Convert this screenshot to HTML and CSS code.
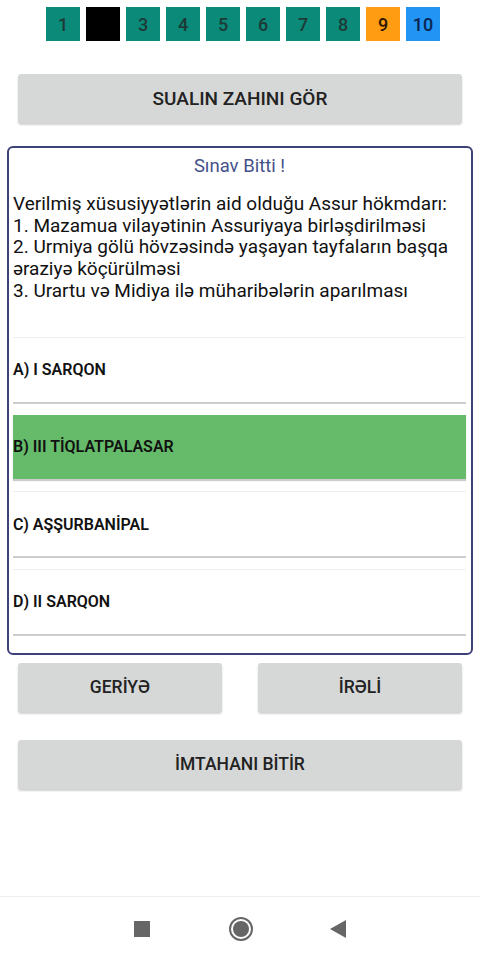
FILE: index.html
```html
<!DOCTYPE html>
<html lang="az">
  <head>
    <meta charset="UTF-8" />
    <meta name="viewport" content="width=device-width, initial-scale=1.0" />
    <title>Sınav</title>
    <link rel="stylesheet" href="styles.css">
  </head>
  <body>
    <div class="screen">
      <!-- sual nömrələri -->
      <div class="numbers">
        <span class="num">1</span>
        <span class="num current"></span>
        <span class="num">3</span>
        <span class="num">4</span>
        <span class="num">5</span>
        <span class="num">6</span>
        <span class="num">7</span>
        <span class="num">8</span>
        <span class="num orange">9</span>
        <span class="num blue">10</span>
      </div>

      <button class="btn wide hint">SUALIN ZAHINI GÖR</button>

      <div class="card">
        <div class="status">Sınav Bitti !</div>
        <div class="question">
          Verilmiş xüsusiyyətlərin aid olduğu Assur hökmdarı:<br>
          1. Mazamua vilayətinin Assuriyaya birləşdirilməsi<br>
          2. Urmiya gölü hövzəsində yaşayan tayfaların başqa əraziyə köçürülməsi<br>
          3. Urartu və Midiya ilə müharibələrin aparılması
        </div>
        <div class="options">
          <div class="option">A) I SARQON</div>
          <div class="option right">B) III TİQLATPALASAR</div>
          <div class="option">C) AŞŞURBANİPAL</div>
          <div class="option">D) II SARQON</div>
        </div>
      </div>

      <div class="nav-row">
        <button class="btn half">GERİYƏ</button>
        <button class="btn half">İRƏLİ</button>
      </div>

      <button class="btn wide finish">İMTAHANI BİTİR</button>

      <div class="sysbar">
        <span class="sq"></span>
        <span class="home"><span class="dot"></span></span>
        <span class="back"></span>
      </div>
    </div>
  </body>
</html>
```

FILE: styles.css
```css
* {
  margin: 0;
  padding: 0;
  box-sizing: border-box;
}

body {
  font-family: Roboto, "Noto Sans", sans-serif;
  background: #fff;
  color: #000;
}

.screen {
  min-height: 960px;
  display: flex;
  flex-direction: column;
}

.numbers {
  display: flex;
  gap: 6px;
  padding: 7px 0 0 46px;
}

.num {
  width: 34px;
  height: 34px;
  background: #0b8a7a;
  color: #1d3a36;
  font-size: 18px;
  font-weight: 500;
  display: flex;
  align-items: center;
  justify-content: center;
}

.num.current {
  background: #000;
}

.num.orange {
  background: #ff9c12;
  color: #2a1800;
}

.num.blue {
  background: #2194f4;
  color: #0a2650;
}

.btn {
  border: none;
  background: #d6d7d7;
  border-radius: 3px;
  box-shadow: 0 2px 2px rgba(0, 0, 0, 0.18);
  font-family: Roboto, sans-serif;
  font-size: 17.5px;
  font-weight: 500;
  color: #222;
  height: 49px;
}

.wide {
  margin: 33px 18px 0;
}

.hint {
  font-size: 19px;
}

.card {
  margin: 23px 7px 0;
  border: 2px solid #3d4177;
  border-radius: 6px;
  padding: 7px 5px 19px 4px;
}

.status {
  text-align: center;
  color: #44508a;
  font-size: 18.5px;
  line-height: 22px;
}

.question {
  margin-top: 16px;
  font-size: 19px;
  line-height: 21.7px;
  color: #111;
}

.options {
  margin-top: 36px;
  display: flex;
  flex-direction: column;
  gap: 13.4px;
}

.option {
  height: 64px;
  background: #fff;
  box-shadow: 0 -1px 0 #efefef, 0 2px 0 #cdcdcd;
  display: flex;
  align-items: center;
  font-size: 16px;
  font-weight: 600;
  color: #111;
}

.option.right {
  background: #66bb6a;
  box-shadow: 0 2px 1px rgba(0, 0, 0, 0.2);
}

.nav-row {
  display: flex;
  justify-content: space-between;
  padding: 0 18px;
  margin-top: 8px;
}

.half {
  width: 204px;
}

.finish {
  margin-top: 28px;
}

.sysbar {
  margin-top: auto;
  height: 64px;
  border-top: 1px solid #eeeeee;
  display: flex;
  align-items: center;
  justify-content: center;
}

.sq {
  width: 16px;
  height: 16px;
  background: #666;
  margin-right: 79px;
}

.home {
  width: 24px;
  height: 24px;
  border: 2px solid #666;
  border-radius: 50%;
  display: flex;
  align-items: center;
  justify-content: center;
  margin-right: 77px;
}

.dot {
  width: 16px;
  height: 16px;
  border-radius: 50%;
  background: #666;
}

.back {
  width: 0;
  height: 0;
  border-top: 9px solid transparent;
  border-bottom: 9px solid transparent;
  border-right: 16px solid #666;
}
```
